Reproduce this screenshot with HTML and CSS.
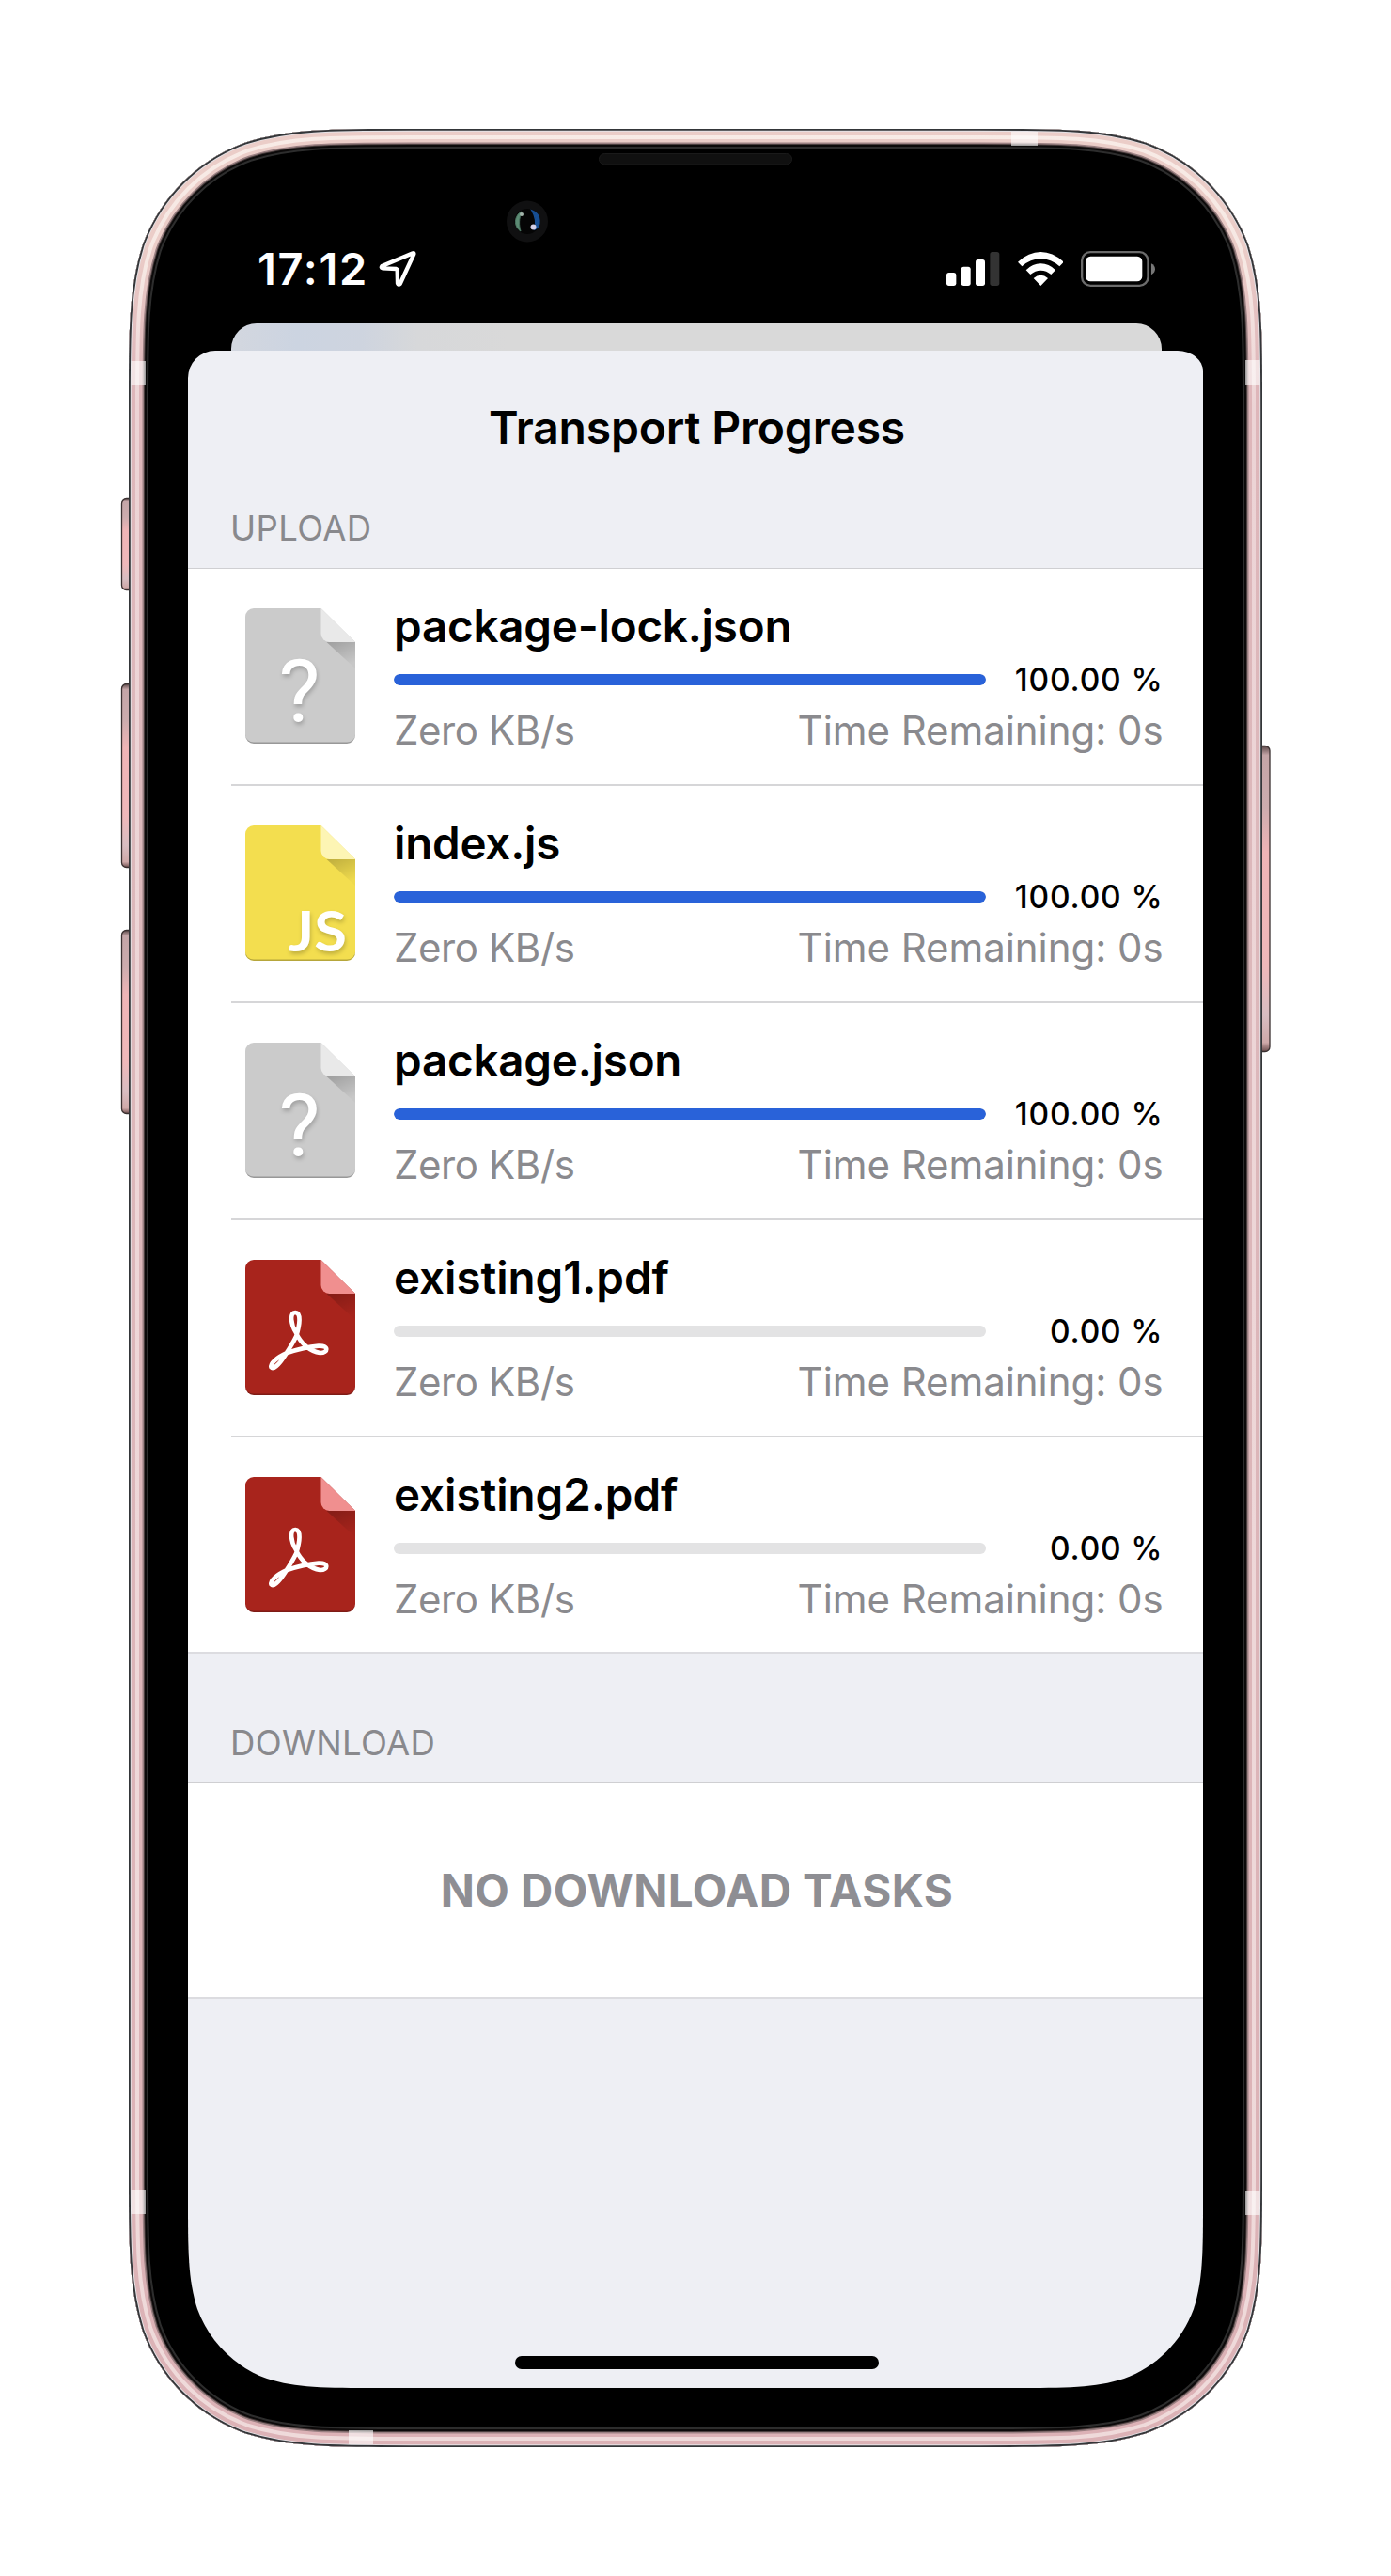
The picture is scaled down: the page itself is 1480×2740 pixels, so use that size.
FILE: index.html
```html
<!DOCTYPE html>
<html lang="en">
<head>
<meta charset="utf-8">
<title>Transport Progress</title>
<link rel="stylesheet" href="styles.css">
</head>
<body>
<svg class="defs" aria-hidden="true">
  <defs>
    <linearGradient id="foldShade" x1="0" y1="0" x2="0.5" y2="1">
      <stop offset="0" stop-color="#000" stop-opacity=".22"/>
      <stop offset="1" stop-color="#000" stop-opacity=".02"/>
    </linearGradient>
    <path id="sheetShape" d="M9 0H80.500L117 36V135a9 9 0 0 1-9 9H9a9 9 0 0 1-9-9V9A9 9 0 0 1 9 0Z"/>
    <path id="sheetBase" d="M0 134.500V135a9 9 0 0 0 9 9H108a9 9 0 0 0 9-9V134.500a9 8.500 0 0 1-9 8H9a9 8.500 0 0 1-9-8Z" fill="#000" fill-opacity=".25"/>
    <path id="foldFlap" d="M80.500 0L117 36H89.500a9 9 0 0 1-9-9Z"/>
    <path id="foldShadow" d="M86.500 36H117V64Z" fill="url(#foldShade)"/>
    <g id="iconUnknown">
      <use href="#sheetShape" fill="#cbcbcb"/><use href="#sheetBase"/><use href="#foldShadow"/>
      <use href="#foldFlap" fill="#e9e9e9"/>
      <text class="glyph glyph-unknown" x="57.500" y="120">?</text>
    </g>
    <g id="iconPdf">
      <use href="#sheetShape" fill="#a8241c"/><use href="#sheetBase"/><use href="#foldShadow"/>
      <use href="#foldFlap" fill="#f08f8f"/>
      <path transform="translate(-20.5 -20) scale(.33333)" fill="none" stroke="#fff" stroke-width="14" stroke-linejoin="round" d="M223 292C206 265 203 229 221 228C240 229 236 265 224 304C214 325 206 338 190 362C166 400 150 410 144 403C141 391 161 372 195 357C225 347 262 338 295 335C329 332 327 358 300 357C270 353 240 330 223 292Z"/>
    </g>
    <g id="iconJs">
      <use href="#sheetShape" fill="#f3de4f"/><use href="#sheetBase"/><use href="#foldShadow"/>
      <use href="#foldFlap" fill="#fdf5b4"/>
      <text class="glyph glyph-js" x="46" y="134" textLength="62" lengthAdjust="spacingAndGlyphs">JS</text>
    </g>
  </defs>
</svg>

<main class="phone">
  <svg class="frame" viewBox="0 0 1224 2466" aria-hidden="true">
    <defs>
      <path id="body" d="M309 0H915C1001.700 0 1044.800 0 1091.200 14.700C1141.900 33.100 1181.900 73.100 1200.300 123.800C1215 170.200 1215 213.300 1215 300V2166C1215 2252.700 1215 2295.800 1200.300 2342.200C1181.900 2392.900 1141.900 2432.900 1091.200 2451.300C1044.800 2466 1001.700 2466 915 2466H309C222.300 2466 179.200 2466 132.800 2451.300C82.100 2432.900 42.100 2392.900 23.700 2342.200C9 2295.800 9 2252.700 9 2166V300C9 213.300 9 170.200 23.700 123.800C42.100 73.100 82.100 33.100 132.800 14.700C179.200 0 222.300 0 309 0Z"/>
      <clipPath id="bodyClip"><use href="#body"/></clipPath>
      <linearGradient id="pink" gradientUnits="userSpaceOnUse" x1="0" y1="0" x2="0" y2="2466">
        <stop offset="0" stop-color="#ebcdc8"/><stop offset=".05" stop-color="#ebcdc8"/>
        <stop offset=".11" stop-color="#deb6ba"/><stop offset=".3" stop-color="#dcb8bb"/><stop offset="1" stop-color="#dcb2b6"/>
      </linearGradient>
      <linearGradient id="shine" gradientUnits="userSpaceOnUse" x1="0" y1="0" x2="0" y2="2466">
        <stop offset="0" stop-color="#f8ebe6"/><stop offset=".06" stop-color="#f6e8e3"/>
        <stop offset=".12" stop-color="#ecd3d5"/><stop offset="1" stop-color="#efdada"/>
      </linearGradient>
      <linearGradient id="key" x1="0" y1="0" x2="0" y2="1">
        <stop offset="0" stop-color="#5b4848"/><stop offset=".03" stop-color="#c4a5a7"/><stop offset=".2" stop-color="#ccacae"/>
        <stop offset=".35" stop-color="#efb4b6"/><stop offset=".72" stop-color="#efb8ba"/><stop offset=".88" stop-color="#d8bdc1"/>
        <stop offset=".97" stop-color="#cfa9a9"/><stop offset="1" stop-color="#6f4f4f"/>
      </linearGradient>
    </defs>
    <g fill="url(#key)" stroke="#3a3030" stroke-width="1.300">
      <rect x="1.500" y="393.500" width="14" height="97" rx="5"/>
      <rect x="1.500" y="590.500" width="14" height="195" rx="5"/>
      <rect x="1.500" y="852.500" width="14" height="195" rx="5"/>
      <rect x="1208" y="656.500" width="15" height="325" rx="5"/>
    </g>
    <use href="#body"/>
    <g clip-path="url(#bodyClip)" fill="none">
      <use href="#body" stroke="#2d2d2d" stroke-width="42"/>
      <use href="#body" stroke="#0c0a0a" stroke-width="38"/>
      <use href="#body" stroke="#4a3e3e" stroke-width="34"/>
      <use href="#body" stroke="#9a8082" stroke-width="32"/>
      <use href="#body" stroke="url(#pink)" stroke-width="29"/>
      <use href="#body" stroke="url(#shine)" stroke-width="22"/>
      <use href="#body" stroke="url(#pink)" stroke-width="14"/>
      <use href="#body" stroke="#e6e4e8" stroke-width="5.500"/>
      <use href="#body" stroke="#343639" stroke-width="3.600"/>
      <path fill="#fff" fill-opacity=".6" d="M948 3h28v15h-28zM243 2448h26v15h-26zM11.500 247h15.500v26h-15.500zM11.500 2192h15.500v26h-15.500zM1197 246h15.500v26h-15.500zM1197 2193h15.500v26h-15.500z"/>
    </g>
    <rect x="509.500" y="26.500" width="205" height="11.500" rx="5.700" fill="#101010" stroke="#1a1a1a"/>
    <circle cx="433" cy="98.500" r="22" fill="#101011"/>
    <circle cx="433" cy="98.500" r="13.500" fill="#050505"/>
    <path d="M427 88C419 92 418 104 426 109C424 102 424 96 427 88Z" fill="#5c8b74" stroke="#4b7461" stroke-width="1"/>
    <path d="M438 87C448 91 448 104 441 107C443 100 442 94 438 87Z" fill="#174f94" stroke="#174f94" stroke-width="1.500"/>
    <circle cx="427" cy="91" r="2" fill="#a3b5ab"/><circle cx="439.500" cy="104.500" r="3" fill="#d4d0e6"/>
  </svg>

  <div class="screen">
    <header class="status">
      <div class="clock">
        <span>17:12</span>
        <svg class="locate" viewBox="850 438 120 118"><path d="M959 448L860 489Q856 494 862 496L906 498Q909 499 909 502L910 544Q913 551 918 546L962 451Q963 446 959 448Z" fill="none" stroke="#fff" stroke-width="13" stroke-linejoin="round"/></svg>
      </div>
      <div class="indicators">
        <svg class="signal" viewBox="204 438 170 114">
          <g fill="#fff"><rect x="204" y="507" width="31" height="42" rx="8"/><rect x="251" y="488" width="30" height="61" rx="8"/><rect x="297" y="465" width="30" height="84" rx="8"/></g>
          <rect x="343" y="441" width="30" height="108" rx="8" fill="#333"/>
        </svg>
        <svg class="wifi" viewBox="429 438 146 114">
          <path fill="#fff" d="M429 473Q463 441 502 441Q541 441 575 473L562 487Q535 463 502 463Q469 463 442 487ZM455 499Q476 478 502 478Q528 478 549 499L535 513Q520 500 502 500Q484 500 469 513ZM479 525Q490 515 502 515Q514 515 525 525L502 549Z"/>
        </svg>
        <svg class="battery" viewBox="630 438 238 114">
          <rect x="633.500" y="441.500" width="211" height="107" rx="27" fill="none" stroke="#6b6b6b" stroke-width="7"/>
          <rect x="645" y="455" width="181" height="80" rx="16" fill="#fff"/>
          <path d="M855 478Q867 484 867 496Q867 508 855 514Z" fill="#777"/>
        </svg>
      </div>
    </header>
    <div class="backdrop-card"></div>
    <section class="sheet">
      <h1 class="title">Transport Progress</h1>

      <h2 class="label label-first">UPLOAD</h2>
      <ul class="list">
        <li class="task">
          <svg class="file-icon" viewBox="0 0 117 144"><use href="#iconUnknown"/></svg>
          <div class="detail">
            <div class="name">package-lock.json</div>
            <div class="progress"><div class="track"><div class="fill" style="width:100%"></div></div><span class="percent">100.00 %</span></div>
            <div class="meta"><span class="speed">Zero KB/s</span><span class="remaining">Time Remaining: 0s</span></div>
          </div>
        </li>
        <li class="task">
          <svg class="file-icon" viewBox="0 0 117 144"><use href="#iconJs"/></svg>
          <div class="detail">
            <div class="name">index.js</div>
            <div class="progress"><div class="track"><div class="fill" style="width:100%"></div></div><span class="percent">100.00 %</span></div>
            <div class="meta"><span class="speed">Zero KB/s</span><span class="remaining">Time Remaining: 0s</span></div>
          </div>
        </li>
        <li class="task">
          <svg class="file-icon" viewBox="0 0 117 144"><use href="#iconUnknown"/></svg>
          <div class="detail">
            <div class="name">package.json</div>
            <div class="progress"><div class="track"><div class="fill" style="width:100%"></div></div><span class="percent">100.00 %</span></div>
            <div class="meta"><span class="speed">Zero KB/s</span><span class="remaining">Time Remaining: 0s</span></div>
          </div>
        </li>
        <li class="task">
          <svg class="file-icon" viewBox="0 0 117 144"><use href="#iconPdf"/></svg>
          <div class="detail">
            <div class="name name-numbered">existing1.pdf</div>
            <div class="progress"><div class="track"><div class="fill" style="width:0%"></div></div><span class="percent">0.00 %</span></div>
            <div class="meta"><span class="speed">Zero KB/s</span><span class="remaining">Time Remaining: 0s</span></div>
          </div>
        </li>
        <li class="task">
          <svg class="file-icon" viewBox="0 0 117 144"><use href="#iconPdf"/></svg>
          <div class="detail">
            <div class="name name-numbered">existing2.pdf</div>
            <div class="progress"><div class="track"><div class="fill" style="width:0%"></div></div><span class="percent">0.00 %</span></div>
            <div class="meta"><span class="speed">Zero KB/s</span><span class="remaining">Time Remaining: 0s</span></div>
          </div>
        </li>
      </ul>

      <h2 class="label">DOWNLOAD</h2>
      <div class="list empty">NO DOWNLOAD TASKS</div>
      <div class="home-bar"></div>
    </section>
  </div>
</main>
</body>
</html>
```
FILE: styles.css
```css
* {
  box-sizing: border-box;
}

body {
  margin: 0;
  background: #fff;
  color: #000;
  font-family: Inter, "Liberation Sans", sans-serif;
}

h1,
h2,
ul {
  margin: 0;
  padding: 0;
}

.defs {
  display: block;
  width: 0;
  height: 0;
}

.phone {
  position: relative;
  width: 1206px;
  height: 2466px;
  margin: 137px;
  padding: 63px;
}

/* The frame is 9px wider on each side to hold the side keys. */
.frame {
  position: absolute;
  top: 0;
  left: -9px;
  width: 1224px;
  height: 2466px;
}

.screen {
  position: relative;
  display: flex;
  flex-direction: column;
  width: 1080px;
  height: 2340px;
  clip-path: path("M0 0H1080V2136.7C1080 2195.2 1080 2224.5 1070 2256C1057.5 2290.4 1030.400 2317.500 996 2330C964.500 2340 935.200 2340 876.700 2340H203.300C144.800 2340 115.500 2340 84 2330C49.600 2317.500 22.500 2290.400 10 2256C0 2224.500 0 2195.200 0 2136.700Z");
}

.status {
  display: flex;
  justify-content: space-between;
  align-items: center;
  height: 144px;
  padding: 27px 51px 0 74px;
  color: #fff;
}

.clock,
.indicators {
  display: flex;
  align-items: center;
}

.clock {
  gap: 11px;
  font-size: 47px;
  font-weight: 600;
  line-height: 48px;
  letter-spacing: 1.700px;
}

.locate {
  width: 40px;
  height: 39.300px;
}

.indicators {
  gap: 18.500px;
}

.signal {
  width: 56.700px;
  height: 38px;
}

.wifi {
  width: 48.700px;
  height: 38px;
}

.battery {
  width: 79.300px;
  height: 38px;
}

.backdrop-card {
  height: 29px;
  margin: 0 44px 0 46px;
  border-radius: 27px 27px 0 0;
  background: linear-gradient(90deg, #d3d7df 0, #ccd4e1 7%, #ced4df 14%, #d7d8da 20%, #d9d9d9 30%);
}

.sheet {
  flex: 1;
  display: flex;
  flex-direction: column;
  border-radius: 29px 27px 0 0 / 29px 22px 0 0;
  background: #eeeff4;
}

.title {
  height: 164px;
  padding-left: 3px;
  font-size: 48px;
  font-weight: 600;
  line-height: 164px;
  letter-spacing: -0.180px;
  text-align: center;
}

.label {
  height: 136px;
  padding: 69.500px 45px 0;
  color: #89898d;
  font-size: 36.500px;
  font-weight: 400;
  line-height: 50px;
  letter-spacing: 0.350px;
}

.label-first {
  height: 67px;
  padding-top: 0;
}

.list {
  border-top: 1px solid #cfcfd2;
  border-bottom: 2px solid #dcdce0;
  background: #fff;
  list-style: none;
}

.task {
  position: relative;
  display: flex;
  height: 231px;
  padding: 33px 45px 0 60.500px;
}

.task:last-child {
  height: 228px;
}

.task + .task::before {
  content: "";
  position: absolute;
  top: -2px;
  right: 0;
  left: 46px;
  height: 1.500px;
  background: #d6d6d8;
}

.file-icon {
  flex: none;
  width: 117px;
  height: 144px;
  margin: 9.300px 41.500px 0 0;
}

.glyph {
  fill: #fff;
  filter: drop-shadow(1px 3px 2px rgba(0, 0, 0, 0.2));
}

.glyph-unknown {
  font: 400 93px Roboto, sans-serif;
  text-anchor: middle;
}

.glyph-js {
  font: 700 59px Lato, sans-serif;
}

.detail {
  flex: 1;
}

.name {
  font-size: 47.500px;
  font-weight: 600;
  line-height: 56px;
  letter-spacing: -0.220px;
}

.name-numbered {
  letter-spacing: -0.050px;
}

.progress {
  display: flex;
  justify-content: space-between;
  align-items: center;
  height: 40px;
  margin-top: 9px;
}

.track {
  width: 630px;
  height: 12px;
  border-radius: 6px;
  overflow: hidden;
  background: #e3e3e4;
}

.fill {
  height: 100%;
  border-radius: 6px;
  background: #2962d9;
}

.percent {
  margin-right: -2.500px;
  font-size: 33.500px;
  font-weight: 500;
  letter-spacing: 0.850px;
}

.meta {
  display: flex;
  justify-content: space-between;
  margin-top: 8px;
  color: #8a8a8e;
  font-size: 42px;
  line-height: 52px;
}

.speed {
  letter-spacing: -0.400px;
}

.remaining {
  margin-right: -2.500px;
  letter-spacing: -0.060px;
}

.empty {
  height: 231px;
  padding-left: 3px;
  color: #8e8e93;
  font-size: 47.500px;
  font-weight: 700;
  line-height: 230px;
  letter-spacing: 0.420px;
  text-align: center;
}

.home-bar {
  width: 387px;
  height: 14px;
  margin: auto 345px 20px 348px;
  border-radius: 7px;
  background: #000;
}
```
